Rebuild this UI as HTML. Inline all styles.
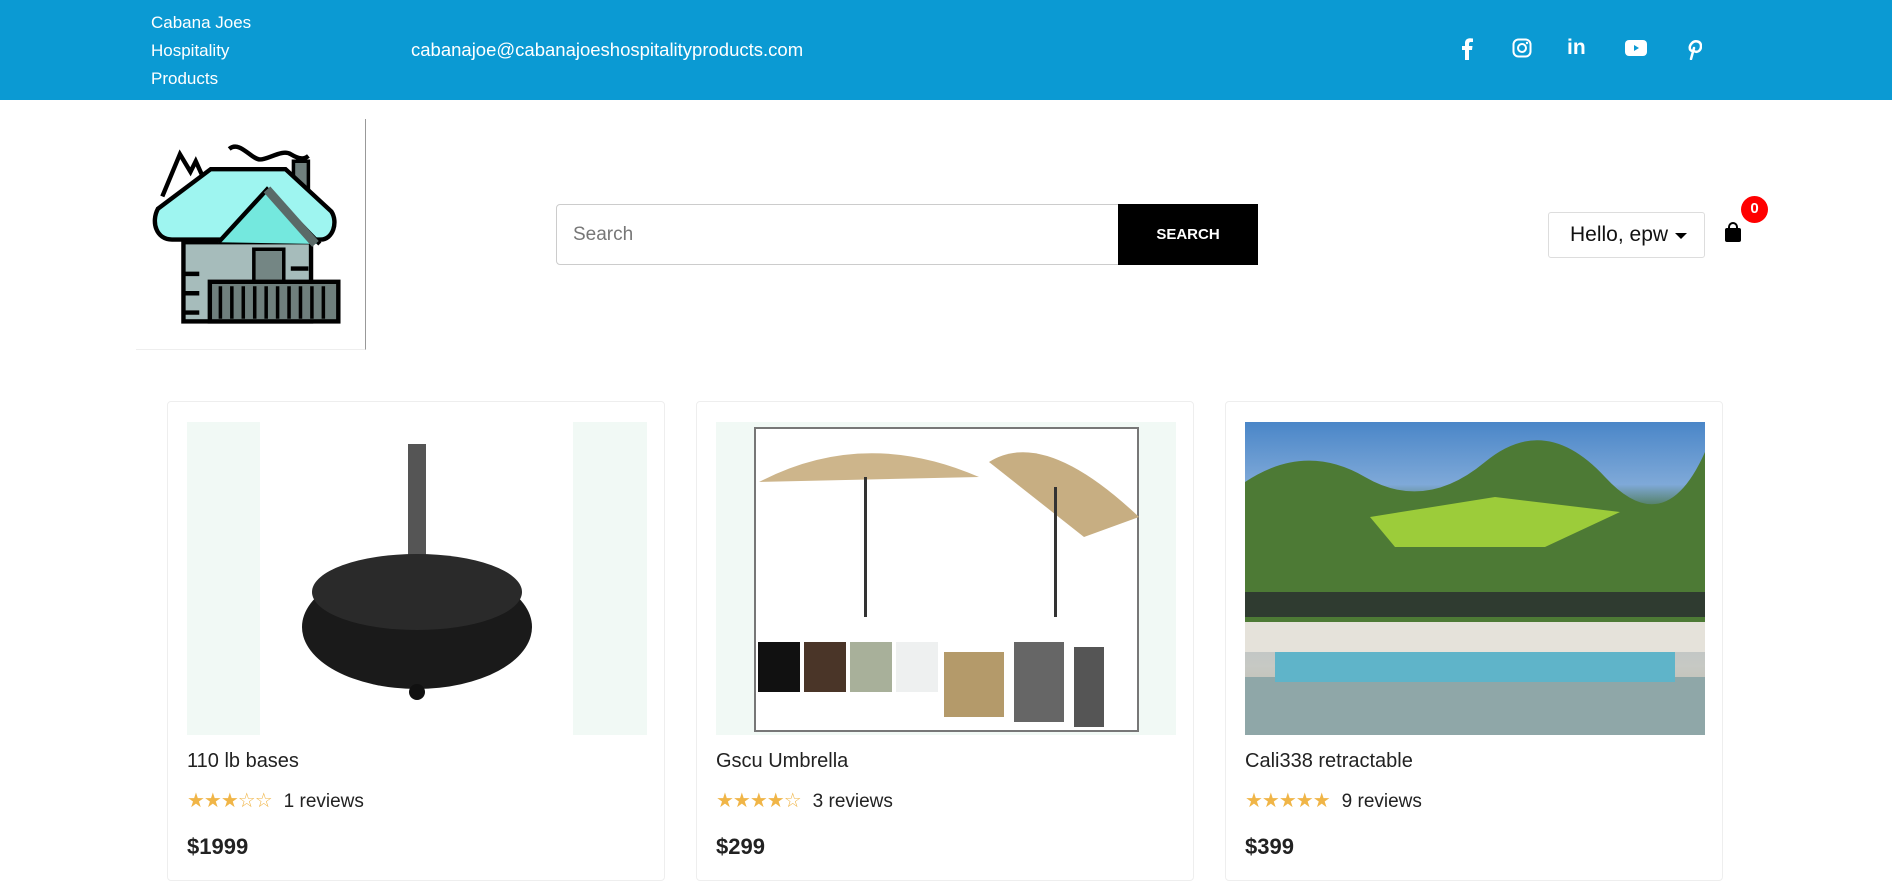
<!DOCTYPE html>
<html><head><meta charset="utf-8"><style>
*{box-sizing:border-box;margin:0;padding:0}
body{width:1892px;height:881px;overflow:hidden;background:#fff;font-family:"Liberation Sans",sans-serif;color:#222;position:relative}
.top{position:absolute;left:0;top:0;width:1892px;height:100px;background:#0b9ad3;color:#fff}
.brand{position:absolute;left:151px;top:9px;font-size:17px;line-height:28px}
.email{position:absolute;left:411px;top:39px;font-size:18.5px}
.soc{position:absolute;top:38px}
.logo{position:absolute;left:136px;top:119px;width:230px;height:231px;border-right:1px solid #999;border-bottom:1px solid #eee}
.search{position:absolute;left:556px;top:204px;width:563px;height:61px;border:1px solid #ccc;border-radius:4px 0 0 4px;font-size:19px;color:#777;padding:19px 16px}
.btn{position:absolute;left:1118px;top:204px;width:140px;height:61px;background:#000;color:#fff;font-size:15px;font-weight:bold;text-align:center;line-height:61px}
.hello{position:absolute;left:1548px;top:212px;width:157px;height:46px;border:1px solid #ddd;border-radius:3px;font-size:21px;color:#111;padding:10px 0 0 21px}
.hello:after{content:"";position:absolute;left:126px;top:20px;border:6px solid transparent;border-top:6px solid #000}
.badge{position:absolute;left:1741px;top:196px;width:27px;height:27px;border-radius:50%;background:#f00;color:#fff;font-weight:bold;font-size:15px;text-align:center;line-height:26px}
.card{position:absolute;top:401px;width:498px;height:480px;border:1px solid #eee;border-radius:4px}
.img{position:absolute;left:19px;top:20px;width:460px;height:313px;overflow:hidden}
.t{position:absolute;left:19px;top:348px;font-size:20px;color:#222}
.r{position:absolute;left:19px;top:386px;font-size:19px;color:#222}
.st{color:#f0b547;font-size:20px;letter-spacing:-1px;margin-right:12px}
.p{position:absolute;left:19px;top:432px;font-size:22px;font-weight:bold;color:#222}
</style></head><body>
<div class="top">
<div class="brand">Cabana Joes<br>Hospitality<br>Products</div>
<div class="email">cabanajoe@cabanajoeshospitalityproducts.com</div>
<svg class="soc" style="left:1459px" width="16" height="22" viewBox="0 0 16 22"><path d="M10 22V12h3l.5-4H10V6c0-1 .3-2 2-2h2V.5C13 .3 12 .2 11 .2 8 .2 6 2 6 5v3H3v4h3v10z" fill="#fff"/></svg>
<svg class="soc" style="left:1512px" width="20" height="20" viewBox="0 0 20 20"><rect x="1.5" y="1.5" width="17" height="17" rx="5" fill="none" stroke="#fff" stroke-width="2"/><circle cx="10" cy="10" r="4" fill="none" stroke="#fff" stroke-width="2"/><circle cx="15" cy="5" r="1.2" fill="#fff"/></svg>
<div class="soc" style="left:1567px;top:36px;font-weight:bold;font-size:21px">in</div>
<svg class="soc" style="left:1625px;top:40px" width="22" height="16" viewBox="0 0 22 16"><rect width="22" height="16" rx="4" fill="#fff"/><path d="M9 5v6l5-3z" fill="#0b9ad3"/></svg>
<svg class="soc" style="left:1686px;top:38px" width="16" height="22" viewBox="0 0 16 22"><path d="M5 21l3-11M6 13c-3-1-3-5 0-8s9-2 9 3-4 7-7 5" fill="none" stroke="#fff" stroke-width="2.5" stroke-linecap="round"/></svg>
</div>
<div class="logo"><svg width="230" height="231" viewBox="0 0 230 231"><g transform="translate(14,0) scale(0.88)">
<path d="M14 88l20-48 12 20 6-12 10 22" stroke="#000" stroke-width="5" fill="none"/>
<path d="M90 34c12-10 25 12 35 12s25-12 35-6 15 6 20 2" stroke="#000" stroke-width="5" fill="none"/>
<rect x="163" y="48" width="17" height="50" fill="#6f7f7d" stroke="#000" stroke-width="4"/>
<rect x="38" y="140" width="145" height="90" fill="#a6bcbb" stroke="#000" stroke-width="5"/>
<path d="M36 198h20M36 220h20M36 176h20M160 170h20M160 190h20" stroke="#000" stroke-width="5"/>
<path d="M9 102l60-45h85l52 48c8 12 2 32-12 32H25c-18 0-24-20-16-35z" fill="#9ef5f0" stroke="#000" stroke-width="5"/>
<path d="M78 140l55-60 60 62" fill="#74e8de" stroke="#000" stroke-width="5"/>
<path d="M133 80l55 62" stroke="#5a6a68" stroke-width="10"/>
<rect x="118" y="148" width="34" height="50" fill="#748684" stroke="#000" stroke-width="4"/>
<rect x="68" y="185" width="146" height="45" fill="#6f7f7d" stroke="#000" stroke-width="5"/>
<path d="M80 190v37M93 190v37M106 190v37M119 190v37M132 190v37M145 190v37M158 190v37M171 190v37M184 190v37M197 190v37" stroke="#000" stroke-width="4"/>
</g></svg></div>
<div class="search">Search</div><div class="btn">SEARCH</div>
<div class="hello">Hello, epw</div>
<svg style="position:absolute;left:1724px;top:222px" width="18" height="20" viewBox="0 0 18 20"><path d="M5 7V5a4 4 0 018 0v2" fill="none" stroke="#000" stroke-width="2"/><rect x="1" y="6" width="16" height="14" rx="2" fill="#000"/></svg>
<div class="badge">0</div>

<div class="card" style="left:167px"><div class="img" style="background:#f1f9f5"><div style="position:absolute;left:73px;top:0;width:313px;height:313px;background:#fff"></div>
<svg style="position:absolute;left:73px;top:0" width="313" height="313" viewBox="0 0 313 313"><rect x="148" y="22" width="18" height="140" fill="#555"/><ellipse cx="157" cy="205" rx="115" ry="62" fill="#1a1a1a"/><ellipse cx="157" cy="170" rx="105" ry="38" fill="#2a2a2a"/><circle cx="157" cy="270" r="8" fill="#111"/></svg></div>
<div class="t">110 lb bases</div><div class="r"><span class="st">★★★☆☆</span>1 reviews</div><div class="p">$1999</div></div>

<div class="card" style="left:696px"><div class="img" style="background:#f1f9f5"><div style="position:absolute;left:38px;top:5px;width:385px;height:305px;background:#fff;border:2px solid #777"></div>
<svg style="position:absolute;left:38px;top:5px" width="385" height="305"><path d="M5 55 Q110 0 225 50Z" fill="#cdb58b"/><path d="M235 35 Q290 0 385 90 L330 110Z" fill="#c7ae82"/><rect x="110" y="50" width="3" height="140" fill="#333"/><rect x="300" y="60" width="3" height="130" fill="#333"/>
<rect x="4" y="215" width="42" height="50" fill="#111"/><rect x="50" y="215" width="42" height="50" fill="#4a3528"/><rect x="96" y="215" width="42" height="50" fill="#a8b09a"/><rect x="142" y="215" width="42" height="50" fill="#eef0f0"/><rect x="190" y="225" width="60" height="65" fill="#b49a6a"/><rect x="260" y="215" width="50" height="80" fill="#666"/><rect x="320" y="220" width="30" height="80" fill="#555"/></svg></div>
<div class="t">Gscu Umbrella</div><div class="r"><span class="st">★★★★☆</span>3 reviews</div><div class="p">$299</div></div>

<div class="card" style="left:1225px"><div class="img" style="background:linear-gradient(#4a86c8 0,#7fa9d8 20%,#3f6b2e 30%,#3b6a2a 62%,#b9c2c8 64%,#c7c9c4 78%,#b8b09a 100%)">
<svg style="position:absolute;left:0;top:0" width="460" height="313"><path d="M0 60 Q60 20 120 55 T240 40 T360 55 T460 30V200H0Z" fill="#4d7a35"/><path d="M125 95 L250 75 L375 90 L300 125 L150 125Z" fill="#9ccc3a"/><rect x="0" y="170" width="460" height="25" fill="#2f3b30"/><rect x="0" y="200" width="460" height="30" fill="#e5e2da"/><rect x="0" y="255" width="460" height="58" fill="#8fa7a8"/><rect x="30" y="230" width="400" height="30" fill="#5fb4c9"/></svg></div>
<div class="t">Cali338 retractable</div><div class="r"><span class="st">★★★★★</span>9 reviews</div><div class="p">$399</div></div>
</body></html>
